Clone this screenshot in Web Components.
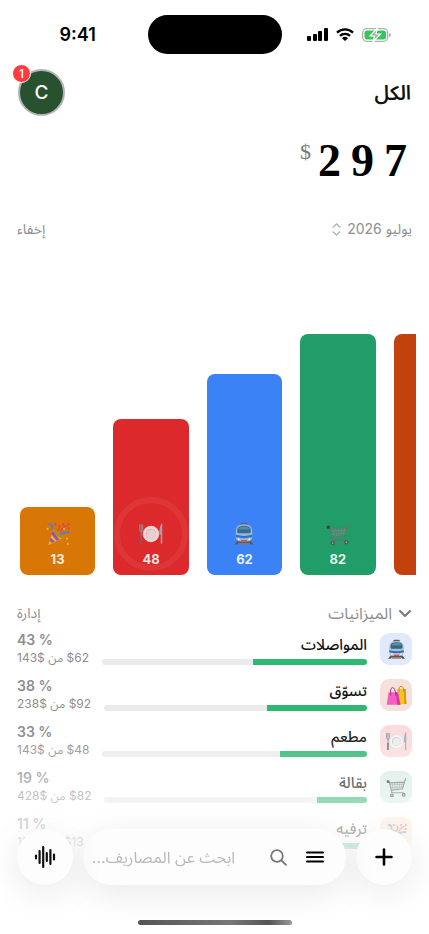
<!DOCTYPE html>
<html lang="ar" dir="rtl">
<head>
<meta charset="utf-8">
<meta name="viewport" content="width=device-width, initial-scale=1">
<title>الكل</title>
<style>
  html, body {
    margin: 0;
    background: #fff;
  }

  body {
    min-height: 100vh;
    font-family: Inter, "Noto Sans Arabic", "DejaVu Sans", sans-serif;
    color: #111;
  }
</style>
</head>
<body>
<expense-app></expense-app>

<script>
  // Category pictures, all on a 32x32 grid
  const PICTURES = {
    party: `
      <path d="M3 31 10 9q9 3 13 12Z" fill="#f3c12f"/>
      <path d="M10 9q-2 4 4 9t9 3q1-3-4-7t-9-5Z" fill="#b98a1e"/>
      <path d="m9 12 9 11-4 2-7-9ZM6 21l6 5-4 2-3-3Z" fill="#8e4fc4"/>
      <path d="M3 3q7-1 5 7M19 17q4-4 12-3" fill="none" stroke="#4f7fd0" stroke-width="3"/>
      <path d="M15 12q5-3 2-8M20 13q1-6 8-8" fill="none" stroke="#e2405b" stroke-width="2"/>
      <g fill="#e2405b"><circle cx="12" cy="3" r="1.600"/><circle cx="23" cy="3" r="1.600"/><circle cx="30" cy="3" r="1.600"/><circle cx="30" cy="9" r="1.600"/></g>
      <g fill="#f3c12f"><circle cx="24" cy="9" r="1.500"/><circle cx="28" cy="22" r="1.500"/><circle cx="29" cy="29" r="1.500"/><circle cx="2" cy="9" r="1.500"/></g>`,
    plate: `
      <circle cx="16" cy="16" r="11" fill="#dfe0e2"/>
      <circle cx="16" cy="16" r="10" fill="#f4f4f4"/>
      <circle cx="16" cy="16" r="7" fill="#d3d4d6"/>
      <circle cx="16.5" cy="16.5" r="6" fill="#ececed"/>
      <path d="M1 3v7q0 3 2 3v16M5 3v7q0 3-2 3M3 3v10" fill="none" stroke="#8b95a1" stroke-width="1.4"/>
      <path d="M2 18h2v11H2Z" fill="#5f6975"/>
      <path d="M30 2q-3 5-3 15h2v12h2V2Z" fill="#a5b0bb"/>`,
    train: `
      <path d="m8 24-5 6h4l2-2h14l2 2h4l-5-6Z" fill="#5b5654"/>
      <path d="M9 28h14v2H9Z" fill="#8d7468"/>
      <rect x="11" y="1" width="10" height="4" rx="2" fill="#5b6168"/>
      <path d="M5 12Q5 3 16 3t11 9v8q0 5-6 6H11q-6-1-6-6Z" fill="#b5bdc5"/>
      <path d="M7 10q1-5 9-5t9 5v3q0 2-2 2H9q-2 0-2-2Z" fill="#33677f"/>
      <path d="M9 8q2-2 7-2t7 2v2H9Z" fill="#5590a5"/>
      <path d="M5 17q11 3 22 0v3q-11 3-22 0Z" fill="#1b6fd8"/>
      <circle cx="9" cy="23" r="1.4" fill="#fff"/><circle cx="23" cy="23" r="1.4" fill="#fff"/>
      <path d="M12 24h8v2h-8Z" fill="#d05454"/>`,
    cart: `
      <path d="M2 7h3l4 17h18M5 9l23-1-3 10-17 2M28 8l2-6" fill="none" stroke="#6d7072" stroke-width="1.8"/>
      <path d="m9 9 2 10M13 9l1 10M17 9v10M21 9l-1 9M25 8l-2 10M6 12l21-1M7 16l19-1" fill="none" stroke="#84888a" stroke-width="1"/>
      <rect x="1" y="5" width="4" height="4" rx="1" fill="#37393b"/>
      <circle cx="9" cy="28" r="3" fill="#55585a"/><circle cx="27" cy="27" r="3" fill="#55585a"/>
      <circle cx="9" cy="28" r="1" fill="#bbb"/><circle cx="27" cy="27" r="1" fill="#bbb"/>`,
    bags: `
      <path d="M17 6h13l1 23H18Z" fill="#f5c51c"/>
      <path d="M27 6h3l1 23h-3Z" fill="#d79a13"/>
      <path d="M20 10q-1-8 3-8t4 8" fill="none" stroke="#c08b1a" stroke-width="1.5"/>
      <path d="M4 11h15l3 19H1Z" fill="#f25fc0"/>
      <path d="m17 11 5 19h-5l-2-19Z" fill="#c93a99"/>
      <path d="M7 16Q6 4 10 4t5 12" fill="none" stroke="#b42d86" stroke-width="1.5"/>`
  };

  /**
   * Small base class: clones a template string into an open shadow root
   */
  class BaseElement extends HTMLElement {
    constructor() {
      super();
      this.attachShadow({ mode: 'open' });
    }

    connectedCallback() {
      const template = document.createElement('template');
      template.innerHTML = this.render();
      this.shadowRoot.replaceChildren(template.content.cloneNode(true));
    }
  }

  /**
   * Category picture, sized by its host
   */
  class CategoryIcon extends BaseElement {
    render() {
      return `
        <style>
          :host { display: block; width: 24px; height: 24px; }
          svg { display: block; width: 100%; height: 100%; }
        </style>
        <svg viewBox="0 0 32 32" aria-hidden="true">${PICTURES[this.getAttribute('name')]}</svg>
      `;
    }
  }

  class StatusBar extends BaseElement {
    render() {
      return `
        <style>
          :host {
            display: grid;
            grid-template-columns: 1fr 134px 1fr;
            align-items: center;
            justify-items: center;
            height: 69px;
            padding: 0 8px;
            direction: ltr;
          }
          time { font-size: 18px; font-weight: 600; color: #000; }
          .island { width: 100%; height: 39px; border-radius: 20px; background: #000; }
          .signals { display: flex; align-items: center; gap: 8px; padding-right: 4px; }
          svg { display: block; }
        </style>
        <time>9:41</time>
        <div class="island"></div>
        <div class="signals">
          <svg width="21" height="13" viewBox="0 0 21 13">
            <rect y="8" width="4" height="5" rx="1"/>
            <rect x="6" y="6" width="4" height="7" rx="1"/>
            <rect x="11" y="3" width="4" height="10" rx="1"/>
            <rect x="17" width="4" height="13" rx="1"/>
          </svg>
          <svg width="18" height="13" viewBox="0 0 18 13">
            <path d="M1 4.6a11.5 11.5 0 0 1 16 0M4 7.8a7.2 7.2 0 0 1 10 0" fill="none" stroke="#000" stroke-width="2.3"/>
            <path d="M6 10.2a4.3 4.3 0 0 1 6 0l-3 2.8Z"/>
          </svg>
          <svg width="29" height="14" viewBox="0 0 29 14">
            <rect x=".7" y=".7" width="25" height="12.6" rx="4" fill="none" stroke="#b0b0b0" stroke-width="1.3"/>
            <path d="M27 5q2 .4 2 2t-2 2Z" fill="#b0b0b0"/>
            <rect x="2.5" y="2.5" width="21.5" height="9" rx="2.5" fill="#34c759"/>
            <path d="M15.5 0 8 8h4.500L11 14l7.500-8H14Z" fill="#aaa" stroke="#fff" stroke-width="1.2"/>
          </svg>
        </div>
      `;
    }
  }

  class PageHeader extends BaseElement {
    render() {
      return `
        <style>
          :host {
            display: flex;
            align-items: center;
            justify-content: space-between;
            padding: 0 18px;
          }
          h1 { margin: 0; font-size: 20px; line-height: 28px; font-weight: 600; color: #111; }
          button {
            position: relative;
            width: 47px;
            height: 47px;
            padding: 0;
            border: 2px solid #b3b3b3;
            border-radius: 50%;
            background: #28512f;
            color: #fff;
            font: 500 19px/24px Inter, sans-serif;
          }
          .badge {
            position: absolute;
            top: -7px;
            left: -8px;
            width: 17px;
            height: 17px;
            border: 1px solid #fff;
            border-radius: 50%;
            background: #ff3a40;
            font-size: 12px;
            line-height: 17px;
          }
        </style>
        <h1><slot></slot></h1>
        <button type="button">C<span class="badge">1</span></button>
      `;
    }
  }

  class TotalAmount extends BaseElement {
    render() {
      const digits = [...this.getAttribute('value')].map((d) => `<span>${d}</span>`).join('');

      return `
        <style>
          :host {
            display: flex;
            direction: ltr;
            justify-content: flex-end;
            gap: 7px;
            padding: 20px 22px 0;
            font-family: "Liberation Serif", serif;
          }
          .currency { padding-top: 3px; font-size: 22px; line-height: 26px; color: #777; }
          .digits { display: flex; gap: 10px; font-size: 46px; line-height: 50px; font-weight: 700; color: #000; }
        </style>
        <span class="currency">$</span>
        <div class="digits">${digits}</div>
      `;
    }
  }

  /**
   * Row with a picker on the start side and a text action on the end side
   */
  class SectionBar extends BaseElement {
    render() {
      return `
        <style>
          :host {
            display: flex;
            align-items: center;
            justify-content: space-between;
            padding: 0 17px;
            color: #8e8e93;
          }
          button {
            display: flex;
            align-items: center;
            gap: 6px;
            padding: 0;
            border: 0;
            background: none;
            color: inherit;
            font: 14px/24px Inter, "Noto Sans Arabic", "DejaVu Sans", sans-serif;
          }
          .main { font-size: var(--main-size, 14px); }
        </style>
        <button type="button" class="main"><slot></slot></button>
        <button type="button">${this.getAttribute('action')}</button>
      `;
    }
  }

  /**
   * One column of the chart; the label is left out when there is no value
   */
  class ExpenseBar extends BaseElement {
    render() {
      const value = this.getAttribute('value');
      const label = value === null ? '' : `
        <category-icon name="${this.getAttribute('icon')}"></category-icon>
        <span>${value}</span>`;

      return `
        <style>
          :host {
            position: relative;
            display: flex;
            flex: 0 0 19%;
            flex-direction: column;
            align-items: center;
            justify-content: flex-end;
            gap: 4px;
            box-sizing: border-box;
            padding-bottom: 7px;
            border-radius: 8px;
            height: ${this.getAttribute('height')}px;
            background: ${this.getAttribute('color')};
          }
          category-icon { opacity: 0.85; }
          span { font-size: 13px; line-height: 18px; font-weight: 700; color: rgba(255, 255, 255, 0.9); }
          /* Pulse drawn behind the selected category */
          :host([selected])::before {
            content: "";
            position: absolute;
            bottom: 4px;
            left: 50%;
            box-sizing: border-box;
            width: 74px;
            height: 74px;
            border: 6px solid rgba(255, 255, 255, 0.06);
            border-radius: 50%;
            transform: translateX(-50%);
          }
        </style>
        ${label}
      `;
    }
  }

  class ExpenseChart extends BaseElement {
    render() {
      return `
        <style>
          :host {
            display: flex;
            direction: ltr;
            align-items: flex-end;
            gap: 4.6%;
            height: 334px;
            margin: 0 13px 0 20px;
            overflow: hidden;
          }
        </style>
        <slot></slot>
      `;
    }
  }

  class BudgetRow extends BaseElement {
    render() {
      const percent = this.getAttribute('percent');

      return `
        <style>
          :host { display: flex; align-items: center; gap: 13px; height: 46px; }
          .tile {
            display: flex;
            align-items: center;
            justify-content: center;
            width: 32px;
            height: 32px;
            border-radius: 9px;
            background: ${this.getAttribute('tint')};
          }
          category-icon { width: 21px; height: 21px; }
          .middle { flex: 1; display: flex; flex-direction: column; gap: 3px; }
          label { font-size: 15px; line-height: 22px; font-weight: 500; color: #111; }
          progress {
            appearance: none;
            display: block;
            width: 100%;
            height: 6px;
            border: 0;
            border-radius: 3px;
            overflow: hidden;
            background: #ebebeb;
          }
          progress::-webkit-progress-bar { background: #ebebeb; }
          progress::-webkit-progress-value { background: #2eb872; }
          .figures { text-align: left; color: #8e8e93; }
          .percent { direction: ltr; font-size: 14px; line-height: 18px; font-weight: 600; }
          .spent { font-size: 12px; line-height: 18px; }
        </style>
        <div class="tile"><category-icon name="${this.getAttribute('icon')}"></category-icon></div>
        <div class="middle">
          <label for="bar"><slot></slot></label>
          <progress id="bar" max="100" value="${percent}"></progress>
        </div>
        <div class="figures">
          <div class="percent">${percent} %</div>
          <div class="spent">$${this.getAttribute('spent')} من <bdi dir="ltr">${this.getAttribute('limit')}$</bdi></div>
        </div>
      `;
    }
  }

  class BudgetList extends BaseElement {
    render() {
      return `
        <style>
          :host { display: block; padding: 1px 17px 0; }
        </style>
        <slot></slot>
      `;
    }
  }

  /**
   * Floating dock over the end of the list, with a fade behind it
   */
  class AppDock extends BaseElement {
    render() {
      return `
        <style>
          :host {
            position: fixed;
            inset: auto 0 0 0;
            display: flex;
            flex-direction: column;
            align-items: center;
            gap: 35px;
            padding: 101px 17px 9px;
            background: linear-gradient(to bottom, rgba(255, 255, 255, 0), #fff 148px);
          }
          .controls { display: flex; gap: 10px; width: 100%; }
          button {
            display: flex;
            align-items: center;
            justify-content: center;
            padding: 0;
            border: 0;
            background: none;
          }
          .round, .search {
            height: 56px;
            border-radius: 28px;
            background: #fdfdfd;
            box-shadow: 0 8px 36px rgba(0, 0, 0, 0.09);
          }
          .round { flex: 0 0 56px; }
          .search {
            flex: 1;
            display: flex;
            align-items: center;
            gap: 18px;
            min-width: 0;
            box-sizing: border-box;
            padding: 0 21px 0 10px;
          }
          input {
            flex: 1;
            min-width: 0;
            padding: 0;
            margin-right: 17px;
            border: 0;
            outline: 0;
            background: none;
            font: 16px/24px Inter, "Noto Sans Arabic", "DejaVu Sans", sans-serif;
          }
          input::placeholder { color: #b9b9bb; opacity: 1; }
          .home {
            width: 154px;
            height: 5px;
            border-radius: 3px;
            background: linear-gradient(to right, #555, #777 60%, #555 85%, #999);
          }
          svg { display: block; }
        </style>
        <div class="controls">
          <button type="button" class="round" aria-label="إضافة">
            <svg width="20" height="20" viewBox="0 0 20 20" stroke="#000" stroke-width="2.6" stroke-linecap="round">
              <path d="M10 2.5v15M2.500 10h15"/>
            </svg>
          </button>
          <div class="search">
            <button type="button" aria-label="القائمة">
              <svg width="20" height="12" viewBox="0 0 20 12" stroke="#000" stroke-width="2" stroke-linecap="round">
                <path d="M2 1.500h16M2 6h16M2 10.500h16"/>
              </svg>
            </button>
            <svg width="17" height="17" viewBox="0 0 17 17" fill="none" stroke="#777" stroke-width="1.8" stroke-linecap="round">
              <circle cx="7" cy="7" r="5.8"/><path d="m11.500 11.500 4.500 4.300"/>
            </svg>
            <input type="text" aria-label="بحث" placeholder="ابحث عن المصاريف...">
          </div>
          <button type="button" class="round" aria-label="تسجيل صوتي">
            <svg width="22" height="24" viewBox="0 0 22 24" stroke="#111" stroke-width="2.2" stroke-linecap="round">
              <path d="M2 10.500v3M5.600 6v12M9.200 2v20M12.800 8v8M16.400 5v14M20 9.500v5"/>
            </svg>
          </button>
        </div>
        <div class="home"></div>
      `;
    }
  }

  class ExpenseApp extends BaseElement {
    render() {
      return `
        <style>
          :host { display: block; }
          .month { padding-top: 31px; }
          .budgets { --main-size: 16px; padding-top: 26px; }
        </style>
        <status-bar></status-bar>
        <page-header>الكل</page-header>
        <total-amount value="297"></total-amount>
        <section-bar class="month" action="إخفاء">
          يوليو 2026
          <svg width="9" height="13" viewBox="0 0 9 13" fill="none" stroke="#b5b5b8" stroke-width="1.5">
            <path d="M.8 4.500 4.500 1l3.700 3.500M.8 8.500 4.500 12l3.700-3.500"/>
          </svg>
        </section-bar>
        <expense-chart>
          <expense-bar icon="party" value="13" height="68" color="#d97706"></expense-bar>
          <expense-bar icon="plate" value="48" height="156" color="#dc2a2c" selected></expense-bar>
          <expense-bar icon="train" value="62" height="201" color="#3b82f6"></expense-bar>
          <expense-bar icon="cart" value="82" height="241" color="#219d69"></expense-bar>
          <expense-bar height="241" color="#c2410c"></expense-bar>
        </expense-chart>
        <section-bar class="budgets" action="إدارة">
          <svg width="14" height="9" viewBox="0 0 14 9" fill="none" stroke="#77777b" stroke-width="2" stroke-linecap="round" stroke-linejoin="round">
            <path d="m2 2 5 5 5-5"/>
          </svg>
          الميزانيات
        </section-bar>
        <budget-list>
          <budget-row icon="train" tint="#e1e9fd" percent="43" spent="62" limit="143">المواصلات</budget-row>
          <budget-row icon="bags" tint="#f6e1da" percent="38" spent="92" limit="238">تسوّق</budget-row>
          <budget-row icon="plate" tint="#fadcdd" percent="33" spent="48" limit="143">مطعم</budget-row>
          <budget-row icon="cart" tint="#d6eee4" percent="19" spent="82" limit="428">بقالة</budget-row>
          <budget-row icon="party" tint="#fbe6cf" percent="11" spent="13" limit="119">ترفيه</budget-row>
        </budget-list>
        <app-dock></app-dock>
      `;
    }
  }

  // Register the custom elements, leaves first
  customElements.define('category-icon', CategoryIcon);
  customElements.define('status-bar', StatusBar);
  customElements.define('page-header', PageHeader);
  customElements.define('total-amount', TotalAmount);
  customElements.define('section-bar', SectionBar);
  customElements.define('expense-bar', ExpenseBar);
  customElements.define('expense-chart', ExpenseChart);
  customElements.define('budget-row', BudgetRow);
  customElements.define('budget-list', BudgetList);
  customElements.define('app-dock', AppDock);
  customElements.define('expense-app', ExpenseApp);
</script>
</body>
</html>
